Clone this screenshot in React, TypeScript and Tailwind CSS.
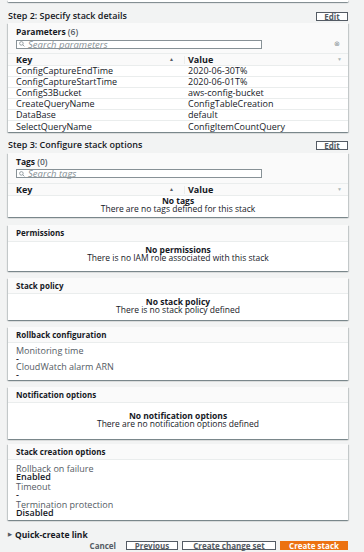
import React from "react";

const params: [string, string][] = [
  ["ConfigCaptureEndTime", "2020-06-30T%"],
  ["ConfigCaptureStartTime", "2020-06-01T%"],
  ["ConfigS3Bucket", "aws-config-bucket"],
  ["CreateQueryName", "ConfigTableCreation"],
  ["DataBase", "default"],
  ["SelectQueryName", "ConfigItemCountQuery"],
];

const panel =
  "bg-white shadow-[0_1px_1px_0_rgba(0,28,36,0.3),1px_1px_1px_0_rgba(0,28,36,0.15),-1px_1px_1px_0_rgba(0,28,36,0.15)]";

function StepHeader({ title, className }: { title: string; className?: string }) {
  return (
    <div className={`flex h-[12px] items-center justify-between ${className ?? ""}`}>
      <span className="text-[9px] font-semibold text-[#16191f]">{title}</span>
      <button className="h-[9px] w-[32px] border border-[#545b64] bg-white text-[8px] leading-none font-bold text-[#545b64]">
        Edit
      </button>
    </div>
  );
}

function SearchBox({ placeholder }: { placeholder: string }) {
  return (
    <div className="flex h-[9px] w-[246px] items-center gap-[3px] border border-[#879196] bg-white px-[2px]">
      <svg width="6" height="6" viewBox="0 0 10 10" className="shrink-0">
        <circle cx="4" cy="4" r="3" fill="none" stroke="#879196" strokeWidth="1.4" />
        <line x1="6.2" y1="6.2" x2="9" y2="9" stroke="#879196" strokeWidth="1.4" />
      </svg>
      <span className="text-[9.5px] leading-none italic text-[#879196]">{placeholder}</span>
    </div>
  );
}

function TableHead() {
  return (
    <div className="flex h-[13px] items-center border-y border-[#eaeded] bg-[#fafafa] text-[9px] font-bold text-[#16191f]">
      <div className="flex w-[176px] items-center justify-between pr-[10px] pl-2">
        <span>Key</span>
        <span className="text-[5px] text-[#545b64]">▲</span>
      </div>
      <div className="h-[8px] w-px bg-[#eaeded]" />
      <div className="flex flex-1 items-center justify-between pr-[6px] pl-[3px]">
        <span>Value</span>
        <span className="text-[5px] font-normal text-[#aab7b8]">▼</span>
      </div>
    </div>
  );
}

function SimplePanel({
  title,
  headH,
  children,
}: {
  title: string;
  headH: string;
  children: React.ReactNode;
}) {
  return (
    <div className={panel}>
      <div className={`flex items-center border-b border-[#eaeded] bg-[#fafafa] px-2 ${headH}`}>
        <span className="text-[8px] font-bold text-[#16191f]">{title}</span>
      </div>
      {children}
    </div>
  );
}

function Empty({ title, text, className }: { title: string; text: string; className: string }) {
  return (
    <div className={`text-center text-[8.5px] leading-[8px] text-[#16191f] ${className}`}>
      <div className="font-bold">{title}</div>
      <div>{text}</div>
    </div>
  );
}

function Field({ label, value }: { label: string; value: string }) {
  return (
    <div className="leading-[8px]">
      <div className="text-[9px] text-[#545b64]">{label}</div>
      <div className="text-[9px] font-semibold text-[#16191f]">{value}</div>
    </div>
  );
}

export default function App() {
  return (
    <div
      className="h-[552px] w-[364px] overflow-hidden bg-[#f2f3f3] pr-4 pl-2 text-[#16191f]"
      style={{ fontFamily: '"Open Sans", "Noto Sans", sans-serif' }}
    >
      <div className={`h-[2px] ${panel}`} />

      {/* Step 2 */}
      <StepHeader title="Step 2: Specify stack details" className="mt-[8px]" />
      <div className={`mt-px ${panel}`}>
        <div className="h-[30px] bg-[#fafafa] px-2 pt-[4px]">
          <div className="h-[10px] text-[8.5px] leading-[10px] font-bold">
            Parameters <span className="font-semibold text-[#545b64]">(6)</span>
          </div>
          <div className="mt-[2px] flex items-center justify-between">
            <SearchBox placeholder="Search parameters" />
            <span className="text-[7px] text-[#879196]">⊗</span>
          </div>
        </div>
        <TableHead />
        {params.map(([k, v]) => (
          <div key={k} className="flex h-[11px] items-center border-b border-[#eaeded] text-[9px] last:border-b-0">
            <div className="w-[180px] pl-2">{k}</div>
            <div>{v}</div>
          </div>
        ))}
      </div>

      {/* Step 3 */}
      <StepHeader title="Step 3: Configure stack options" className="mt-[7px]" />
      <div className={`mt-[2px] ${panel}`}>
        <div className="h-[30px] bg-[#fafafa] px-2 pt-[4px]">
          <div className="h-[10px] text-[8.5px] leading-[10px] font-bold">
            Tags <span className="font-semibold text-[#545b64]">(0)</span>
          </div>
          <div className="mt-[2px]">
            <SearchBox placeholder="Search tags" />
          </div>
        </div>
        <TableHead />
        <Empty title="No tags" text="There are no tags defined for this stack" className="h-[21px] pt-px" />
      </div>

      <div className="mt-[8px]">
        <SimplePanel title="Permissions" headH="h-[17px]">
          <Empty
            title="No permissions"
            text="There is no IAM role associated with this stack"
            className="h-[29px] pt-[4px]"
          />
        </SimplePanel>
      </div>

      <div className="mt-[7px]">
        <SimplePanel title="Stack policy" headH="h-[16px]">
          <Empty title="No stack policy" text="There is no stack policy defined" className="h-[26px] pt-[4px]" />
        </SimplePanel>
      </div>

      <div className="mt-[7px]">
        <SimplePanel title="Rollback configuration" headH="h-[16px]">
          <div className="flex h-[37px] flex-col px-2 pt-[4px]">
            <Field label="Monitoring time" value="-" />
            <Field label="CloudWatch alarm ARN" value="-" />
          </div>
        </SimplePanel>
      </div>

      <div className="mt-[7px]">
        <SimplePanel title="Notification options" headH="h-[16px]">
          <Empty
            title="No notification options"
            text="There are no notification options defined"
            className="h-[36px] pt-[9px]"
          />
        </SimplePanel>
      </div>

      <div className="mt-[5px]">
        <SimplePanel title="Stack creation options" headH="h-[16px]">
          <div className="flex h-[60px] flex-col gap-[2px] px-2 pt-[5px]">
            <Field label="Rollback on failure" value="Enabled" />
            <Field label="Timeout" value="-" />
            <Field label="Termination protection" value="Disabled" />
          </div>
        </SimplePanel>
      </div>

      <div className="mt-[10px] flex h-[10px] items-center gap-[3px] text-[8.5px] font-bold text-[#16191f]">
        <span className="text-[5px] text-[#545b64]">▶</span>
        <span>Quick-create link</span>
      </div>

      <div className="flex h-[11px] items-center justify-end gap-[4px] text-[8px] font-bold">
        <span className="mr-[6px] text-[#545b64]">Cancel</span>
        <button className="h-[9px] w-[52px] border border-[#545b64] bg-white leading-none text-[#545b64]">
          Previous
        </button>
        <button className="h-[9px] w-[94px] border border-[#545b64] bg-white leading-none text-[#545b64]">
          Create change set
        </button>
        <button className="h-[9px] w-[68px] bg-[#ec7211] leading-none text-white">Create stack</button>
      </div>
    </div>
  );
}
